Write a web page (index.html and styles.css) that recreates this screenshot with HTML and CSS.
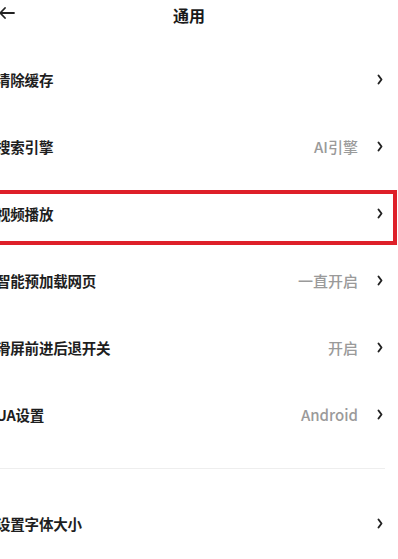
FILE: index.html
```html
<!DOCTYPE html>
<html lang="zh-CN">
<head>
<meta charset="utf-8">
<title>通用</title>
<link rel="stylesheet" href="styles.css">
</head>
<body>
<div class="screen">
  <header class="header">
    <svg class="back" width="16" height="14" viewBox="0 0 16 14"><path d="M15 7H1.5M6 2L1.2 7L6 12" fill="none" stroke="#222" stroke-width="1.8" stroke-linecap="round" stroke-linejoin="round"/></svg>
    <div class="title">通用</div>
    <div></div>
  </header>
  <div class="list">
    <div class="row"><span class="label">清除缓存</span><span class="value"></span><svg class="chev" width="6" height="11" viewBox="0 0 6 11"><path d="M1.5 1.5L4.5 5.5L1.5 9.5" fill="none" stroke="#222" stroke-width="1.9" stroke-linecap="round" stroke-linejoin="round"/></svg></div>
    <div class="row"><span class="label">搜索引擎</span><span class="value">AI引擎</span><svg class="chev" width="6" height="11" viewBox="0 0 6 11"><path d="M1.5 1.5L4.5 5.5L1.5 9.5" fill="none" stroke="#222" stroke-width="1.9" stroke-linecap="round" stroke-linejoin="round"/></svg></div>
    <div class="row highlighted"><span class="label">视频播放</span><span class="value"></span><svg class="chev" width="6" height="11" viewBox="0 0 6 11"><path d="M1.5 1.5L4.5 5.5L1.5 9.5" fill="none" stroke="#222" stroke-width="1.9" stroke-linecap="round" stroke-linejoin="round"/></svg><div class="mark"></div></div>
    <div class="row"><span class="label">智能预加载网页</span><span class="value">一直开启</span><svg class="chev" width="6" height="11" viewBox="0 0 6 11"><path d="M1.5 1.5L4.5 5.5L1.5 9.5" fill="none" stroke="#222" stroke-width="1.9" stroke-linecap="round" stroke-linejoin="round"/></svg></div>
    <div class="row"><span class="label">滑屏前进后退开关</span><span class="value">开启</span><svg class="chev" width="6" height="11" viewBox="0 0 6 11"><path d="M1.5 1.5L4.5 5.5L1.5 9.5" fill="none" stroke="#222" stroke-width="1.9" stroke-linecap="round" stroke-linejoin="round"/></svg></div>
    <div class="row"><span class="label">UA设置</span><span class="value">Android</span><svg class="chev" width="6" height="11" viewBox="0 0 6 11"><path d="M1.5 1.5L4.5 5.5L1.5 9.5" fill="none" stroke="#222" stroke-width="1.9" stroke-linecap="round" stroke-linejoin="round"/></svg></div>
  </div>
  <div class="sep"><div class="line"></div></div>
  <div class="list">
    <div class="row"><span class="label">设置字体大小</span><span class="value"></span><svg class="chev" width="6" height="11" viewBox="0 0 6 11"><path d="M1.5 1.5L4.5 5.5L1.5 9.5" fill="none" stroke="#222" stroke-width="1.9" stroke-linecap="round" stroke-linejoin="round"/></svg></div>
  </div>
</div>
</body>
</html>
```
FILE: styles.css
```css
html, body {
  margin: 0;
  padding: 0;
  background: #fff;
  overflow: hidden;
}
body {
  width: 398px;
  height: 559px;
  font-family: "Noto Sans CJK SC", "Noto Sans", sans-serif;
  color: #1c1c1c;
}
.screen {
  margin-left: -4px;
  width: 402px;
}
.header {
  height: 46px;
  display: grid;
  grid-template-columns: 1fr auto 1fr;
  align-items: start;
  padding-right: 16px;
  box-sizing: border-box;
}
.back {
  display: block;
  margin-top: 6px;
  margin-left: 3px;
}
.title {
  font-size: 16px;
  font-weight: 700;
  line-height: 22px;
  padding-top: 4px;
  color: #1a1a1a;
}
.row {
  position: relative;
  height: 67px;
  display: flex;
  align-items: center;
  padding-right: 15px;
}
.label {
  flex: 1;
  font-size: 14.5px;
  font-weight: 700;
  color: #1e1e1e;
  letter-spacing: -0.2px;
}
.value {
  font-size: 15px;
  color: #9a9a9a;
  margin-right: 19px;
  font-weight: 500;
}
.chev {
  display: block;
}
.mark {
  position: absolute;
  left: -10px;
  right: 1px;
  top: 9.5px;
  height: 55px;
  border: 4px solid #de2029;
  box-sizing: border-box;
  pointer-events: none;
}
.sep {
  padding: 20px 13px 21px 0;
}
.line {
  height: 1px;
  background: #eeeeee;
}
```
